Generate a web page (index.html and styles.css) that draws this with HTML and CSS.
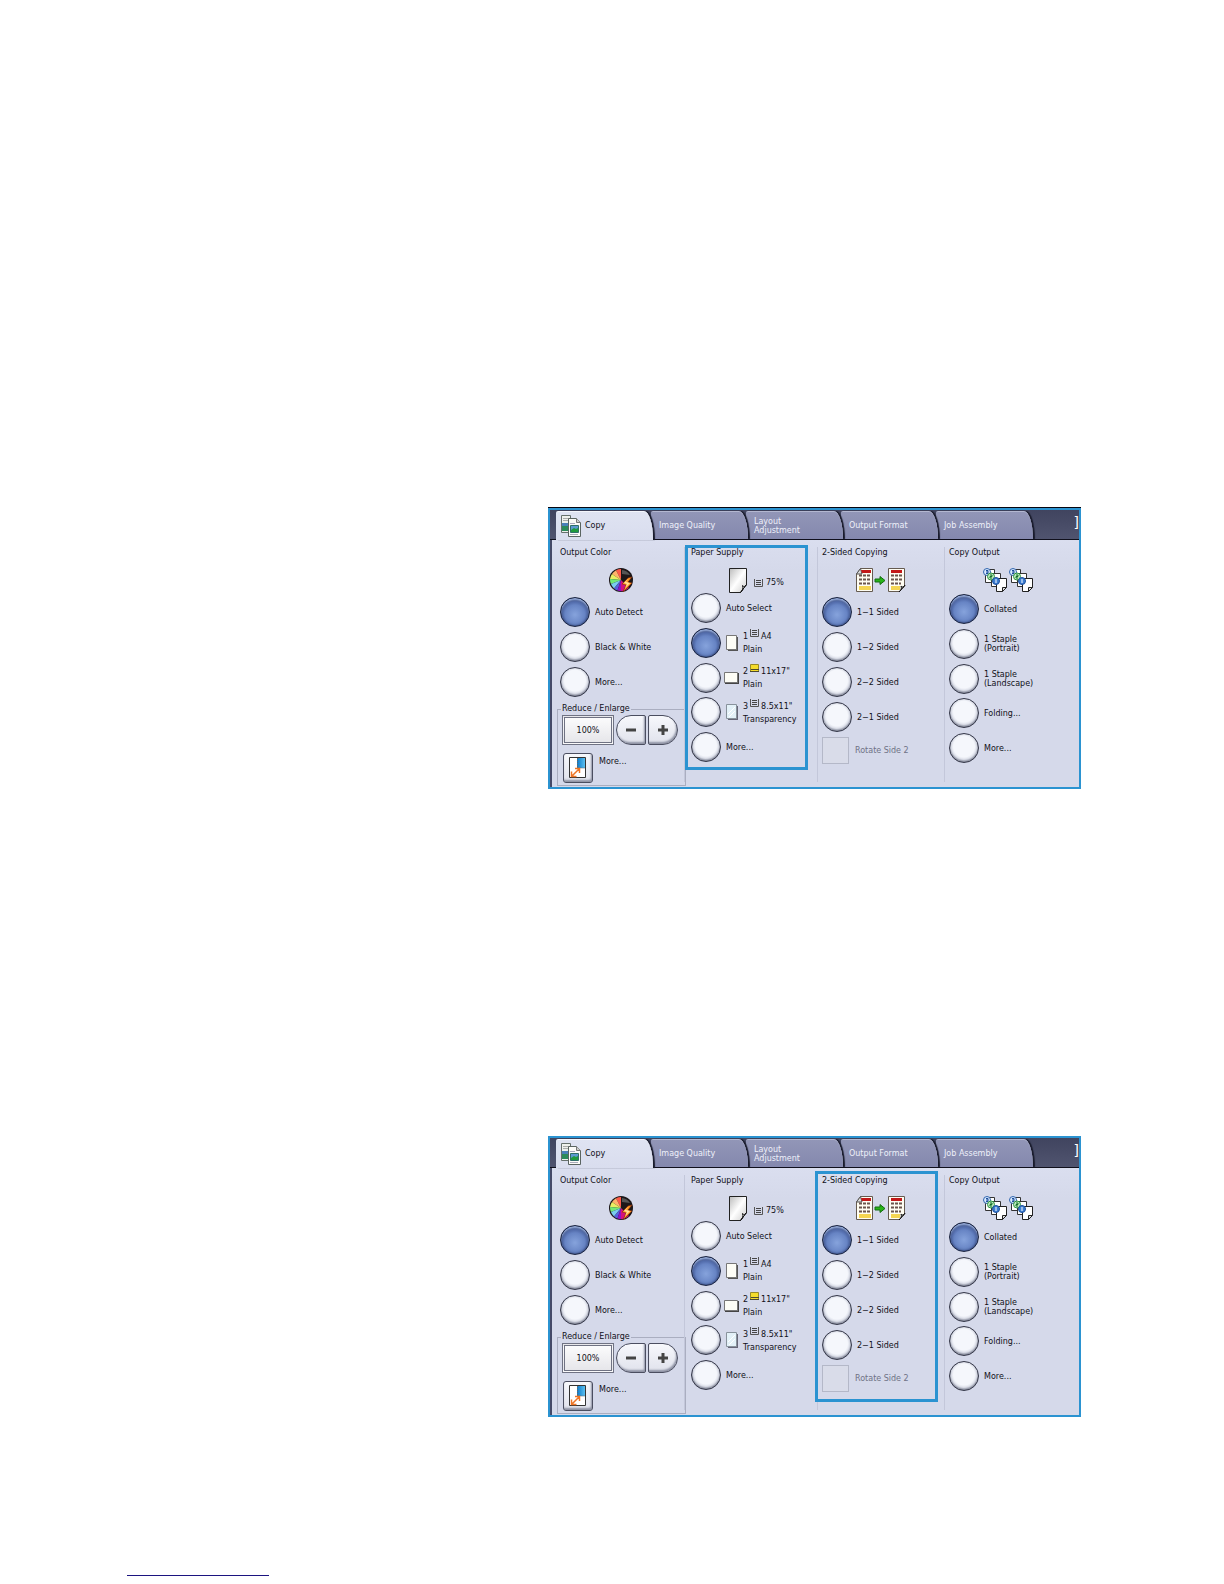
FILE: index.html
```html
<!DOCTYPE html>
<html lang="en">
<head>
  <meta charset="UTF-8">
  <meta name="viewport" content="width=device-width, initial-scale=1.0">
  <title>Copy</title>
  <link rel="stylesheet" href="styles.css">
</head>
<body>

  <!-- Icon shapes -->
  <svg class="defs" width="0" height="0" aria-hidden="true">
    <defs>
      <linearGradient id="sheet" x1="0" y1="0" x2="1" y2="1">
        <stop offset="0" stop-color="#bbb"/>
        <stop offset="0.5" stop-color="#fff"/>
        <stop offset="1" stop-color="#ccc"/>
      </linearGradient>
      <linearGradient id="sky" x1="0" y1="0" x2="1" y2="0">
        <stop offset="0" stop-color="#0a78c8"/>
        <stop offset="1" stop-color="#5cc0f0"/>
      </linearGradient>
    </defs>
    <symbol id="i-copy" viewBox="0 0 21 22">
      <path d="M1.500.500h9v17h-9z" fill="#eef0ec" stroke="#66706c"/>
      <path d="M2 8h7v8H2z" fill="#2c8a5a"/>
      <path d="M2 8h7v3H2z" fill="#4a80b8"/>
      <path d="M3 3.500h6M3 5.500h6" stroke="#aaa"/>
      <path d="M8.500 3.500h8l4 4v14h-12z" fill="#fbfbf8" stroke="#5a6461"/>
      <path d="M16.500 3.500v4h4" fill="#ccc" stroke="#777"/>
      <path d="M10.500 10.500h8v7h-8z" fill="#5c9ad0" stroke="#2f6f68"/>
      <path d="M11 17v-2l3-2 2 1 2-1v4z" fill="#1f9a3c"/>
      <path d="M10 8.500h5M10 19.500h8" stroke="#aab"/>
    </symbol>
    <symbol id="i-color" viewBox="0 0 24 24">
      <circle cx="12" cy="12" r="12" fill="#1c1719"/>
      <path d="M12 12V1A11 11 0 0 0 7 2.200z" fill="#ff5a4a"/>
      <path d="M12 12L7 2.200A11 11 0 0 0 3 6z" fill="#ffb36a"/>
      <path d="M12 12L3 6A11 11 0 0 0 1 11z" fill="#e9ee62"/>
      <path d="M12 12L1 11A11 11 0 0 0 2 16z" fill="#72e977"/>
      <path d="M12 12L2 16A11 11 0 0 0 5 20.500z" fill="#79cdf0"/>
      <path d="M12 12L5 20.500A11 11 0 0 0 8.500 22.500z" fill="#5560dd"/>
      <path d="M12 12L8.500 22.500A11 11 0 0 0 14 23z" fill="#8f12c4"/>
      <path d="M12 12v11A11 11 0 0 0 20 20z" fill="#d5127c"/>
      <path d="M13 2a10 10 0 0 1 8 5L13 6z" fill="#555"/>
      <path d="M19 10l-6 6 4 1-3 7 9-9-4-1 4-5z" fill="#ff9a28" stroke="#802408" stroke-width=".6"/>
      <path d="M19 11l-4 4 3 1-2 4 5-5-4-1z" fill="#ffe39a"/>
    </symbol>
    <symbol id="i-page" viewBox="0 0 18 25">
      <path d="M.5.500h17v16l-6 8H.500z" fill="url(#sheet)" stroke="#222"/>
      <path d="M17.500 16.500c-2 3-3 2-4 1 1 3 0 5-2 7z" fill="#eee" stroke="#111"/>
    </symbol>
    <symbol id="i-tray" viewBox="0 0 9 8">
      <path d="M.5 0v7.500h8V0" fill="none" stroke="#555"/>
      <path d="M2 1.500h5M2 3.500h5M2 5.500h5" stroke="#444"/>
    </symbol>
    <symbol id="i-tray-low" viewBox="0 0 9 8">
      <path d="M.5.500h8v7h-8z" fill="#f4dc2c" stroke="#998b28"/>
      <path d="M1 5.500h8M0 7.500h9" stroke="#4c4930"/>
    </symbol>
    <symbol id="i-sheet" viewBox="0 0 12 16">
      <path d="M2 2h10v14H2z" fill="#555"/>
      <path d="M.5.500h10v14H.500z" fill="#fdfdf6" stroke="#777"/>
    </symbol>
    <symbol id="i-sheet-wide" viewBox="0 0 15 12">
      <path d="M1 1h14v11H1z" fill="#444"/>
      <path d="M.5.500h13v10H.500z" fill="#fdfdf6" stroke="#777"/>
    </symbol>
    <symbol id="i-sheet-clear" viewBox="0 0 12 16">
      <path d="M2 2h10v14H2z" fill="#667"/>
      <path d="M.5.500h10v14H.500z" fill="#e3f1f8" stroke="#88929c"/>
      <path d="M2 10l7-7M3 13l6-6" stroke="#fff"/>
    </symbol>
    <symbol id="i-sides" viewBox="0 0 50 25">
      <path d="M4.500.500h12v23H.500V6z" fill="#fffdf2" stroke="#655b50"/>
      <path d="M.5 6l4-5.500L6 6z" fill="#ddd" stroke="#555"/>
      <path d="M5 2h10v3H6z" fill="#c31818"/>
      <path d="M3 7.500h12M3 11.500h12M3 15.500h12" stroke="#6b554c" stroke-width="2" stroke-dasharray="3 1"/>
      <path d="M3 18h12v4H3z" fill="#f5d552"/>
      <path d="M19 11h5V8.500l5 4-5 4V14h-5z" fill="#28b418" stroke="#146c10"/>
      <path d="M32.500.500h16v18l-5 5h-11z" fill="#fffdf2" stroke="#655b50"/>
      <path d="M35 2h11v3H35z" fill="#c31818"/>
      <path d="M35 7.500h12M35 11.500h12M35 15.500h10" stroke="#6b554c" stroke-width="2" stroke-dasharray="3 1"/>
      <path d="M35 18h9v4h-9z" fill="#f5d552"/>
      <path d="M49 17c-1 3-3 2-4 1 1 3 0 4-2 6z" fill="#fff" stroke="#111"/>
    </symbol>
    <symbol id="i-collate" viewBox="0 0 50 24">
      <g id="set">
        <path d="M2.500 1.500h9v13h-9z" fill="#fff" stroke="#333"/>
        <path d="M8.500 5.500h9v13h-9z" fill="#fff" stroke="#333"/>
        <path d="M13.500 10.500h10v9l-4 4h-6z" fill="#fff" stroke="#222"/>
        <path d="M23.500 19.500h-4v4z" fill="#ddd" stroke="#222"/>
        <circle cx="4" cy="4" r="3.500" fill="#d9eaff" stroke="#3165ad"/>
        <path d="M3 2.500h2v3H3M3 4h2" fill="none" stroke="#1d4f9b"/>
        <circle cx="8" cy="8.500" r="3.500" fill="#bcebbd" stroke="#2f9440"/>
        <path d="M7 7h2v1.500H7V10h2" fill="none" stroke="#16702a"/>
        <circle cx="13" cy="13" r="3.500" fill="#3d7ed2" stroke="#1d4f9b"/>
        <path d="M13 11v4" stroke="#fff"/>
      </g>
      <use href="#set" x="26"/>
    </symbol>
    <symbol id="i-resize" viewBox="0 0 18 22">
      <path d="M.5.500h16v20H.500z" fill="#fff" stroke="#333"/>
      <path d="M8 1h8v10H8z" fill="url(#sky)"/>
      <path d="M8.500 1v10H16" fill="none" stroke="#666" stroke-dasharray="1 1"/>
      <path d="M3 19l7-7M2.500 14.500v5h5M6 11.500h4.500V16" fill="none" stroke="#ee7424" stroke-width="1.500"/>
    </symbol>
    <symbol id="i-minus" viewBox="0 0 10 10">
      <path d="M0 5h10" stroke="#444" stroke-width="3"/>
    </symbol>
    <symbol id="i-plus" viewBox="0 0 10 10">
      <path d="M0 5h10M5 0v10" stroke="#444" stroke-width="3"/>
    </symbol>
  </svg>

  <main>
    <form class="panel panel-paper"></form>
    <form class="panel panel-sides"></form>
  </main>
  <footer></footer>

  <template id="copyScreen">
    <nav class="tabs">
      <button type="button" class="tab active"><svg width="21" height="22"><use href="#i-copy"/></svg>Copy</button>
      <button type="button" class="tab">Image Quality</button>
      <button type="button" class="tab">Layout<br>Adjustment</button>
      <button type="button" class="tab">Output Format</button>
      <button type="button" class="tab">Job Assembly</button>
      <span class="more-tabs">]</span>
    </nav>
    <div class="columns">
      <section class="column color">
        <h2>Output Color</h2>
        <div class="picture"><svg width="24" height="24"><use href="#i-color"/></svg></div>
        <div class="options three">
          <label><input type="radio" name="color" checked>Auto Detect</label>
          <label><input type="radio" name="color">Black &amp; White</label>
          <label><input type="radio" name="color">More...</label>
        </div>
        <fieldset>
          <legend>Reduce / Enlarge</legend>
          <div class="zoom">
            <input type="text" class="percent" value="100%" aria-label="Reduce / Enlarge">
            <button type="button" class="step minus" aria-label="Reduce"><svg width="10" height="10"><use href="#i-minus"/></svg></button>
            <button type="button" class="step plus" aria-label="Enlarge"><svg width="10" height="10"><use href="#i-plus"/></svg></button>
          </div>
          <label class="presets"><button type="button" class="step"><svg width="18" height="22"><use href="#i-resize"/></svg></button>More...</label>
        </fieldset>
      </section>

      <section class="column paper">
        <h2>Paper Supply</h2>
        <div class="picture">
          <svg width="18" height="25"><use href="#i-page"/></svg>
          <svg class="level" width="9" height="8"><use href="#i-tray"/></svg>
          <span>75%</span>
        </div>
        <div class="options five">
          <label><input type="radio" name="paper">Auto Select</label>
          <label><input type="radio" name="paper" checked><svg width="12" height="16"><use href="#i-sheet"/></svg>
            <span class="tray">1<svg width="9" height="8"><use href="#i-tray"/></svg>A4<br>Plain</span></label>
          <label><input type="radio" name="paper"><svg class="wide" width="15" height="12"><use href="#i-sheet-wide"/></svg>
            <span class="tray">2<svg width="9" height="8"><use href="#i-tray-low"/></svg>11x17"<br>Plain</span></label>
          <label><input type="radio" name="paper"><svg width="12" height="16"><use href="#i-sheet-clear"/></svg>
            <span class="tray">3<svg width="9" height="8"><use href="#i-tray"/></svg>8.5x11"<br>Transparency</span></label>
          <label><input type="radio" name="paper">More...</label>
        </div>
      </section>

      <section class="column sides">
        <h2>2-Sided Copying</h2>
        <div class="picture"><svg width="50" height="25"><use href="#i-sides"/></svg></div>
        <div class="options four">
          <label><input type="radio" name="sides" checked>1−1 Sided</label>
          <label><input type="radio" name="sides">1−2 Sided</label>
          <label><input type="radio" name="sides">2−2 Sided</label>
          <label><input type="radio" name="sides">2−1 Sided</label>
        </div>
        <label class="rotate"><input type="checkbox" disabled>Rotate Side 2</label>
      </section>

      <section class="column output">
        <h2>Copy Output</h2>
        <div class="picture"><svg width="50" height="24"><use href="#i-collate"/></svg></div>
        <div class="options five">
          <label><input type="radio" name="output" checked>Collated</label>
          <label><input type="radio" name="output">1 Staple<br>(Portrait)</label>
          <label><input type="radio" name="output">1 Staple<br>(Landscape)</label>
          <label><input type="radio" name="output">Folding...</label>
          <label><input type="radio" name="output">More...</label>
        </div>
      </section>
    </div>
  </template>

  <script>
    // Both panels show the same copy screen
    const screen = document.getElementById('copyScreen');
    document.querySelectorAll('.panel').forEach((panel) => {
      panel.appendChild(screen.content.cloneNode(true));
    });
  </script>
</body>
</html>
```
FILE: styles.css
```css
*, *::before, *::after {
  box-sizing: border-box;
}

body {
  margin: 0;
  background-color: #fff;
  color: #101018;
  font-family: "DejaVu Sans", sans-serif;
  font-size: 8px;
  line-height: 9px;
}

.defs {
  position: absolute;
}

svg {
  display: block;
  flex: none;
}

input, button {
  margin: 0;
  padding: 0;
  font: inherit;
  color: inherit;
}

main {
  padding: 507px 143px 0 548px;
}

.panel {
  border: 2px solid #2b93d1;
  background-color: #d5d9ea;
  margin-bottom: 347px;
}

.panel-paper {
  box-shadow: 0 -1px 0 #050510;
}

.panel:first-child {
  margin-top: 1px;
}

.panel-sides {
  margin-bottom: 158px;
}

/* Tabs */
.tabs {
  display: flex;
  height: 30px;
  padding: 1px 0 0 6px;
  background: linear-gradient(#40445f, #50546f);
  border-bottom: 1px solid #10101c;
}

.tab {
  flex: 0 1 97px;
  display: flex;
  align-items: center;
  margin-right: -2px;
  padding-left: 8px;
  border: 0;
  border-top: 1px solid #b3b7d0;
  border-radius: 2px 0 0 0;
  border-top-right-radius: 9px 28px;
  background: linear-gradient(#9296b7, #8488ae);
  box-shadow: 2px 0 1px #191b2c;
  color: #eef0fa;
  text-align: left;
  position: relative;
}

.tab:nth-child(1) { z-index: 5; }
.tab:nth-child(2) { z-index: 4; }
.tab:nth-child(3) { z-index: 3; }
.tab:nth-child(4) { z-index: 2; }

.tab.active {
  gap: 4px;
  margin-bottom: -1px;
  padding: 0 0 1px 4px;
  border-top-color: #f4f6fc;
  background: linear-gradient(#dfe3f2, #d9ddee);
  color: #101018;
}

.more-tabs {
  margin-left: auto;
  color: #fff;
  font-size: 14px;
  line-height: 22px;
}

/* Columns */
.columns {
  display: grid;
  grid-template-columns: 132fr 133fr 127fr 135fr;
  border-left: 2px solid #454a68;
  background: linear-gradient(#dadeef, #d5d9ea 30px);
  min-height: 247px;
}

.column {
  position: relative;
  padding: 8px 0 0 5px;
}

.column.color {
  padding-left: 8px;
}

.column.paper {
  padding-left: 7px;
}

.column::before {
  content: "";
  position: absolute;
  left: 0;
  top: 7px;
  bottom: 5px;
  border-left: 1px solid #c3c7da;
}

.column.color::before {
  display: none;
}

.panel-paper .paper::after,
.panel-sides .sides::after {
  content: "";
  position: absolute;
  top: 5px;
  left: 1px;
  width: 123px;
  height: 225px;
  border: 3px solid #2b93d1;
  pointer-events: none;
}

.panel-sides .sides::after {
  top: 3px;
  left: -2px;
  height: 231px;
}

h2 {
  margin: 0 0 10px;
  font-size: 8px;
  line-height: 10px;
  font-weight: normal;
}

.picture {
  display: flex;
  height: 24px;
}

.color .picture { margin-left: 49px; }
.paper .picture { margin-left: 38px; }
.sides .picture { margin-left: 34px; }
.output .picture { margin-left: 34px; }

.level {
  margin: 11px 3px 0 7px;
}

.picture span {
  margin-top: 10px;
}

/* Choices */
.options {
  display: flex;
  flex-direction: column;
  justify-content: space-between;
  margin-top: 5px;
}

.paper .options { margin-top: 1px; }
.output .options { margin-top: 2px; }

.three { min-height: 100px; }
.four { min-height: 135px; }
.five { min-height: 169px; }

.options label {
  display: flex;
  align-items: center;
  gap: 5px;
}

input[type="radio"] {
  appearance: none;
  flex: none;
  width: 30px;
  height: 30px;
  border: 1px solid #343748;
  border-radius: 50%;
  background: radial-gradient(circle at 50% 45%, #f5f7fc 50%, #dcdfe9 62%, #9fa3b3 72%);
  box-shadow: inset 0 -1px 2px #888c9c;
}

input[type="radio"]:checked {
  border-color: #1a2440;
  background: radial-gradient(circle at 50% 60%, #86a3dc 0%, #6784c4 45%, #5069a8 60%, #2c3d70 72%);
  box-shadow: inset 0 2px 2px #9db3e0, inset 0 0 3px #1e2c58;
}

.wide {
  margin: 0 -1px 0 -2px;
}

.tray {
  line-height: 13px;
}

.tray svg {
  display: inline-block;
  margin: 0 2px;
  vertical-align: 2px;
}

.rotate {
  display: flex;
  align-items: center;
  gap: 6px;
  margin-top: 5px;
  color: #6f7286;
}

input[type="checkbox"] {
  appearance: none;
  width: 27px;
  height: 27px;
  border: 1px solid #b4b8c8;
  background-color: #d9dce9;
}

/* Reduce / Enlarge */
fieldset {
  min-width: 0;
  margin: 7px -2px 0 -3px;
  padding: 1px 4px 2px;
  border: 1px solid #aaaec0;
}

legend {
  padding: 0 1px;
  margin-left: -1px;
  line-height: 10px;
}

.zoom {
  display: flex;
  gap: 2px;
  margin-bottom: 8px;
}

.percent {
  width: 52px;
  height: 30px;
  border: 3px double #6f7283;
  background: linear-gradient(#fbfbfc, #e6e6ea);
  text-align: center;
}

.step {
  display: flex;
  align-items: center;
  justify-content: center;
  width: 30px;
  height: 30px;
  border: 1px solid #4b4e60;
  border-radius: 3px;
  background: linear-gradient(#f7f8fc, #e0e2ec);
  box-shadow: inset -1px -2px 2px #8e92a4;
}

.minus { border-radius: 15px 2px 2px 15px; }
.plus { border-radius: 2px 15px 15px 2px; }

.presets {
  display: flex;
  gap: 6px;
  padding-left: 1px;
  line-height: 18px;
}

footer {
  width: 142px;
  margin-left: 127px;
  border-top: 1px solid #1c1480;
  padding-bottom: 8px;
}
```
